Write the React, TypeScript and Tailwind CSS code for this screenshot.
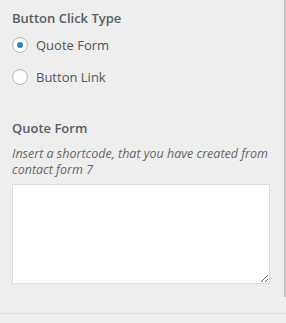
import React from 'react';

function Radio({ checked, label }: { checked?: boolean; label: string }) {
  return (
    <label className="flex items-center h-4">
      <span className="flex items-center justify-center w-4 h-4 rounded-full border border-[#b4b9be] bg-white shadow-[inset_0_1px_2px_rgba(0,0,0,0.07)]">
        {checked && <span className="w-[6px] h-[6px] rounded-full bg-[#1e8cbe]" />}
      </span>
      <span className="ml-2 text-[13px] leading-4 text-[#555]">{label}</span>
    </label>
  );
}

export default function App() {
  return (
    <div
      className="w-[286px] h-[323px] bg-[#eeeeee] flex flex-col overflow-hidden"
      style={{ fontFamily: '"Open Sans", "Noto Sans", sans-serif' }}
    >
      <div className="flex h-[313px]">
        <div className="flex-1 pl-3 pr-[14px] pt-[9px]">
          {/* Button click type */}
          <h3 className="text-[13px] leading-[18px] font-semibold text-[#555d66]">Button Click Type</h3>
          <div className="mt-[10px] flex flex-col gap-4">
            <Radio checked label="Quote Form" />
            <Radio label="Button Link" />
          </div>

          {/* Quote form */}
          <h3 className="mt-[34px] text-[13px] leading-[18px] font-semibold text-[#555d66]">Quote Form</h3>
          <p className="mt-[9px] text-[12.5px] leading-4 italic text-[#666]">
            Insert a shortcode, that you have created from contact form 7
          </p>
          <textarea className="mt-[6px] block w-[258px] h-[100px] bg-white border border-[#dddddd] outline-none" />
        </div>
        <div className="w-[2px] h-[297px] bg-[#c3c3c3]" />
      </div>
      <div className="border-t border-[#dddddd] flex-1" />
    </div>
  );
}
